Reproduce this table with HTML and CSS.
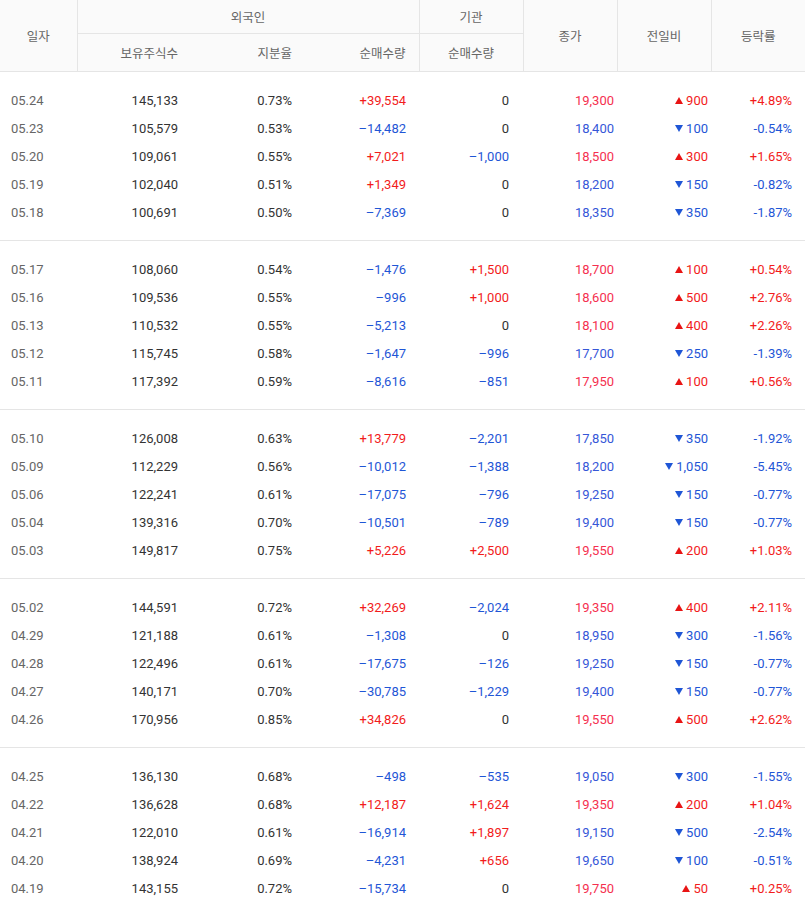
FILE: index.html
```html
<!DOCTYPE html>
<html lang="ko">
<head>
<meta charset="utf-8">
<title>투자자별 매매동향</title>
<link rel="stylesheet" href="styles.css">
</head>
<body>
<table class="trade">
  <colgroup>
    <col class="c-date"><col class="c-w114"><col class="c-w114"><col class="c-w114"><col class="c-w104"><col class="c-w94"><col class="c-w94"><col class="c-w94">
  </colgroup>
  <thead>
    <tr class="h1">
      <th rowspan="2" class="hc">일자</th>
      <th colspan="3" class="hc">외국인</th>
      <th class="hc">기관</th>
      <th rowspan="2" class="hc">종가</th>
      <th rowspan="2" class="hc">전일비</th>
      <th rowspan="2" class="hc">등락률</th>
    </tr>
    <tr class="h2">
      <th class="hr">보유주식수</th>
      <th class="hr">지분율</th>
      <th class="hr">순매수량</th>
      <th class="hc">순매수량</th>
    </tr>
  </thead>
  <tbody>
    <tr><td class="d">05.24</td><td>145,133</td><td>0.73%</td><td class="r">+39,554</td><td class="n5">0</td><td class="p pr">19,300</td><td class="p r"><i class="up"></i>900</td><td class="e r">+4.89%</td></tr>
    <tr><td class="d">05.23</td><td>105,579</td><td>0.53%</td><td class="b">–14,482</td><td class="n5">0</td><td class="p pb">18,400</td><td class="p b"><i class="dn"></i>100</td><td class="e b">-0.54%</td></tr>
    <tr><td class="d">05.20</td><td>109,061</td><td>0.55%</td><td class="r">+7,021</td><td class="n5 b">–1,000</td><td class="p pr">18,500</td><td class="p r"><i class="up"></i>300</td><td class="e r">+1.65%</td></tr>
    <tr><td class="d">05.19</td><td>102,040</td><td>0.51%</td><td class="r">+1,349</td><td class="n5">0</td><td class="p pb">18,200</td><td class="p b"><i class="dn"></i>150</td><td class="e b">-0.82%</td></tr>
    <tr><td class="d">05.18</td><td>100,691</td><td>0.50%</td><td class="b">–7,369</td><td class="n5">0</td><td class="p pb">18,350</td><td class="p b"><i class="dn"></i>350</td><td class="e b">-1.87%</td></tr>
  </tbody>
  <tbody>
    <tr><td class="d">05.17</td><td>108,060</td><td>0.54%</td><td class="b">–1,476</td><td class="n5 r">+1,500</td><td class="p pr">18,700</td><td class="p r"><i class="up"></i>100</td><td class="e r">+0.54%</td></tr>
    <tr><td class="d">05.16</td><td>109,536</td><td>0.55%</td><td class="b">–996</td><td class="n5 r">+1,000</td><td class="p pr">18,600</td><td class="p r"><i class="up"></i>500</td><td class="e r">+2.76%</td></tr>
    <tr><td class="d">05.13</td><td>110,532</td><td>0.55%</td><td class="b">–5,213</td><td class="n5">0</td><td class="p pr">18,100</td><td class="p r"><i class="up"></i>400</td><td class="e r">+2.26%</td></tr>
    <tr><td class="d">05.12</td><td>115,745</td><td>0.58%</td><td class="b">–1,647</td><td class="n5 b">–996</td><td class="p pb">17,700</td><td class="p b"><i class="dn"></i>250</td><td class="e b">-1.39%</td></tr>
    <tr><td class="d">05.11</td><td>117,392</td><td>0.59%</td><td class="b">–8,616</td><td class="n5 b">–851</td><td class="p pr">17,950</td><td class="p r"><i class="up"></i>100</td><td class="e r">+0.56%</td></tr>
  </tbody>
  <tbody>
    <tr><td class="d">05.10</td><td>126,008</td><td>0.63%</td><td class="r">+13,779</td><td class="n5 b">–2,201</td><td class="p pb">17,850</td><td class="p b"><i class="dn"></i>350</td><td class="e b">-1.92%</td></tr>
    <tr><td class="d">05.09</td><td>112,229</td><td>0.56%</td><td class="b">–10,012</td><td class="n5 b">–1,388</td><td class="p pb">18,200</td><td class="p b"><i class="dn"></i>1,050</td><td class="e b">-5.45%</td></tr>
    <tr><td class="d">05.06</td><td>122,241</td><td>0.61%</td><td class="b">–17,075</td><td class="n5 b">–796</td><td class="p pb">19,250</td><td class="p b"><i class="dn"></i>150</td><td class="e b">-0.77%</td></tr>
    <tr><td class="d">05.04</td><td>139,316</td><td>0.70%</td><td class="b">–10,501</td><td class="n5 b">–789</td><td class="p pb">19,400</td><td class="p b"><i class="dn"></i>150</td><td class="e b">-0.77%</td></tr>
    <tr><td class="d">05.03</td><td>149,817</td><td>0.75%</td><td class="r">+5,226</td><td class="n5 r">+2,500</td><td class="p pr">19,550</td><td class="p r"><i class="up"></i>200</td><td class="e r">+1.03%</td></tr>
  </tbody>
  <tbody>
    <tr><td class="d">05.02</td><td>144,591</td><td>0.72%</td><td class="r">+32,269</td><td class="n5 b">–2,024</td><td class="p pr">19,350</td><td class="p r"><i class="up"></i>400</td><td class="e r">+2.11%</td></tr>
    <tr><td class="d">04.29</td><td>121,188</td><td>0.61%</td><td class="b">–1,308</td><td class="n5">0</td><td class="p pb">18,950</td><td class="p b"><i class="dn"></i>300</td><td class="e b">-1.56%</td></tr>
    <tr><td class="d">04.28</td><td>122,496</td><td>0.61%</td><td class="b">–17,675</td><td class="n5 b">–126</td><td class="p pb">19,250</td><td class="p b"><i class="dn"></i>150</td><td class="e b">-0.77%</td></tr>
    <tr><td class="d">04.27</td><td>140,171</td><td>0.70%</td><td class="b">–30,785</td><td class="n5 b">–1,229</td><td class="p pb">19,400</td><td class="p b"><i class="dn"></i>150</td><td class="e b">-0.77%</td></tr>
    <tr><td class="d">04.26</td><td>170,956</td><td>0.85%</td><td class="r">+34,826</td><td class="n5">0</td><td class="p pr">19,550</td><td class="p r"><i class="up"></i>500</td><td class="e r">+2.62%</td></tr>
  </tbody>
  <tbody>
    <tr><td class="d">04.25</td><td>136,130</td><td>0.68%</td><td class="b">–498</td><td class="n5 b">–535</td><td class="p pb">19,050</td><td class="p b"><i class="dn"></i>300</td><td class="e b">-1.55%</td></tr>
    <tr><td class="d">04.22</td><td>136,628</td><td>0.68%</td><td class="r">+12,187</td><td class="n5 r">+1,624</td><td class="p pr">19,350</td><td class="p r"><i class="up"></i>200</td><td class="e r">+1.04%</td></tr>
    <tr><td class="d">04.21</td><td>122,010</td><td>0.61%</td><td class="b">–16,914</td><td class="n5 r">+1,897</td><td class="p pb">19,150</td><td class="p b"><i class="dn"></i>500</td><td class="e b">-2.54%</td></tr>
    <tr><td class="d">04.20</td><td>138,924</td><td>0.69%</td><td class="b">–4,231</td><td class="n5 r">+656</td><td class="p pb">19,650</td><td class="p b"><i class="dn"></i>100</td><td class="e b">-0.51%</td></tr>
    <tr><td class="d">04.19</td><td>143,155</td><td>0.72%</td><td class="b">–15,734</td><td class="n5">0</td><td class="p pr">19,750</td><td class="p r"><i class="up"></i>50</td><td class="e r">+0.25%</td></tr>
  </tbody>
</table>
</body>
</html>
```
FILE: styles.css
```css
html, body {
  margin: 0;
  padding: 0;
  background: #fff;
}
body {
  font-family: Roboto, "Noto Sans CJK KR", "Noto Sans", sans-serif;
  font-size: 13px;
  color: #333;
}
.trade {
  width: 805px;
  table-layout: fixed;
  border-collapse: collapse;
  border-spacing: 0;
}
.c-date { width: 77px; }
.c-w114 { width: 114px; }
.c-w104 { width: 104px; }
.c-w94 { width: 94px; }

thead th {
  background: #fafafa;
  font-family: "Noto Sans CJK KR", sans-serif;
  font-weight: 400;
  font-size: 12.5px;
  color: #666;
  border: 1px solid #e5e5e5;
  border-top: none;
  padding: 0;
}
thead th:first-child { border-left: none; }
thead tr.h1 th:last-child { border-right: none; }
.h1 th { height: 33px; }
.h2 th { height: 37px; }
.hc { text-align: center; }
thead th.hr {
  text-align: right;
  padding-right: 13px;
  border-left: none;
  border-right: none;
}

tbody { border-bottom: 1px solid #e5e5e5; }
tbody td {
  height: 28px;
  padding: 0 13px 0 0;
  text-align: right;
  white-space: nowrap;
  vertical-align: middle;
}
tbody tr:first-child td { height: 28px; padding-top: 14px; }
tbody tr:last-child td { height: 28px; padding-bottom: 14px; }
tbody td.d {
  text-align: left;
  padding-left: 11px;
  color: #666;
}
tbody td.n5 { padding-right: 14px; }
tbody td.p { padding-right: 3px; }
tbody td.e { padding-right: 13px; }

.r { color: #f21c1c; }
.b { color: #1f56d6; }
.pr { color: #f5304f; }
.pb { color: #3657d8; }

.up, .dn {
  display: inline-block;
  width: 0;
  height: 0;
  border-left: 4px solid transparent;
  border-right: 4px solid transparent;
  margin-right: 3px;
  vertical-align: 1px;
}
.up { border-bottom: 7px solid #e81414; }
.dn { border-top: 7px solid #1f56d6; }
```
